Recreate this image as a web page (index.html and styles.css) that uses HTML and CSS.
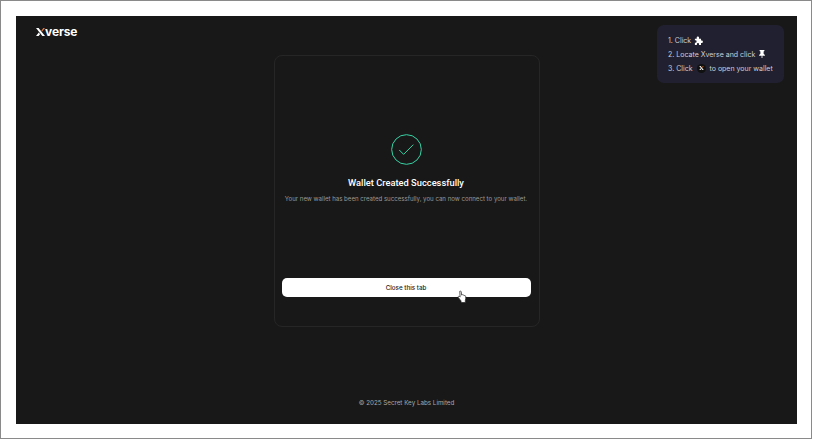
FILE: index.html
```html
<!DOCTYPE html>
<html lang="en">
<head>
    <meta charset="UTF-8">
    <title>Xverse Wallet</title>
    <link rel="stylesheet" href="styles.css">
</head>
<body>
    <div class="frame">
        <div class="screen">
            <header class="topbar">
                <div class="logo">
                    <svg class="logo-x" viewBox="0 0 9 8" width="9" height="8">
                        <path d="M0 0h2.6L9 8H6.4z" fill="#fff"/>
                        <path d="M0 8l2.8-3.4 1.3 1.6L2.6 8z" fill="#fff"/>
                        <path d="M5.3 2.7L7.4 0H9L6.2 3.6z" fill="#ee7a30"/>
                    </svg>
                    <span>verse</span>
                </div>
            </header>

            <div class="hint">
                <div class="hint-row">1. Click
                    <svg class="hint-icon" viewBox="0 0 10 10" width="9" height="9">
                        <path d="M1 3h2V1.8a1.3 1.3 0 0 1 2.6 0V3h2.2v2.1h.8a1.3 1.3 0 0 1 0 2.6h-.8V10H5.6V9a1.2 1.2 0 0 0-2.4 0v1H1V7.4h.6a1.3 1.3 0 0 0 0-2.6H1z" fill="#fff"/>
                    </svg>
                </div>
                <div class="hint-row">2. Locate Xverse and click
                    <svg class="hint-icon" viewBox="0 0 10 10" width="8" height="8">
                        <path d="M2 0h6v1.2L7 2v2.6l1.6 1.6v1H5.5V10h-1V7.2H1.4v-1L3 4.6V2L2 1.2z" fill="#fff"/>
                    </svg>
                </div>
                <div class="hint-row">3. Click
                    <span class="hint-badge">
                        <svg viewBox="0 0 9 8" width="5" height="4">
                            <path d="M0 0h2.6L9 8H6.4z" fill="#fff"/>
                            <path d="M0 8l2.8-3.4 1.3 1.6L2.6 8z" fill="#fff"/>
                            <path d="M5.3 2.7L7.4 0H9L6.2 3.6z" fill="#ee7a30"/>
                        </svg>
                    </span>
                    to open your wallet
                </div>
            </div>

            <main class="card">
                <div class="status">
                    <svg class="status-icon" viewBox="0 0 32 32" width="31" height="31">
                        <circle cx="16" cy="16" r="15.300" fill="none" stroke="#38d9a9" stroke-width="1"/>
                        <path d="M8.500 16.500l4.500 4.500 10-10" fill="none" stroke="#38d9a9" stroke-width="1"/>
                    </svg>
                    <h1>Wallet Created Successfully</h1>
                    <p>Your new wallet has been created successfully, you can now connect to your wallet.</p>
                </div>
                <button class="close-btn">Close this tab</button>
                <svg class="cursor" viewBox="0 0 12 16" width="11" height="15">
                    <path d="M3 1.2c.8-.6 1.600 0 1.700.9l.3 3.200.5-.3c.5-.2 1 0 1.200.4.5-.3 1.100-.1 1.300.4.6-.2 1.200.1 1.400.7.4 1.400.2 3.200-.3 4.600v2.400H4.400v-1.800L1.600 8.200c-.5-.7-.3-1.400.3-1.500.5-.1 1 .2 1.500.8z" fill="#fff" stroke="#222" stroke-width=".8"/>
                </svg>
            </main>

            <footer class="footer">© 2025 Secret Key Labs Limited</footer>
        </div>
    </div>
</body>
</html>
```

FILE: styles.css
```css
* {
    box-sizing: border-box;
}
html, body {
    margin: 0;
    height: 100%;
    background: #fff;
}
body {
    font-family: Inter, "Noto Sans", sans-serif;
    overflow: hidden;
}
.frame {
    width: 812px;
    height: 439px;
    border: 1px solid #8a8a8a;
    padding: 15px 14px 14px 15px;
}
.screen {
    position: relative;
    height: 100%;
    width: 781px;
    background: #181818;
    display: flex;
    flex-direction: column;
    align-items: center;
}
.topbar {
    width: 100%;
    height: 39px;
    padding: 9px 0 0 20px;
}
.logo {
    display: flex;
    align-items: baseline;
    color: #fff;
    font-size: 12px;
    font-weight: 700;
    line-height: 14px;
    letter-spacing: -0.1px;
}
.hint {
    position: absolute;
    top: 9px;
    right: 13px;
    width: 127px;
    height: 58px;
    padding: 8px 0 0 11px;
    background: #202030;
    border-radius: 7px;
    color: #cfcfd4;
    font-size: 7px;
}
.hint-row {
    display: flex;
    align-items: center;
    gap: 3px;
    height: 14px;
    white-space: nowrap;
}
.hint-badge {
    display: inline-flex;
    align-items: center;
    justify-content: center;
    width: 9px;
    height: 9px;
    margin: 0 1px;
    background: #111;
    border-radius: 50%;
}
.card {
    position: relative;
    width: 266px;
    height: 272px;
    border: 1px solid #262626;
    border-radius: 8px;
    padding: 78px 8px 0 7px;
    display: flex;
    flex-direction: column;
    align-items: center;
}
.status {
    display: flex;
    flex-direction: column;
    align-items: center;
    height: 144px;
}
.status-icon {
    margin: 0 0 11px 1px;
}
h1 {
    margin: 0 0 4px;
    color: #fff;
    font-family: Roboto, sans-serif;
    font-size: 9.300px;
    font-weight: 500;
    line-height: 14px;
    white-space: nowrap;
}
p {
    margin: 0;
    color: #9a9a9a;
    font-size: 6.100px;
    line-height: 10px;
    white-space: nowrap;
}
.close-btn {
    width: 100%;
    height: 19px;
    padding: 0;
    border: none;
    border-radius: 5px;
    background: #fff;
    color: #181818;
    font-family: Inter, sans-serif;
    font-size: 6.250px;
    font-weight: 500;
}
.cursor {
    position: absolute;
    left: 182px;
    top: 234px;
}
.footer {
    margin-top: 71px;
    color: #a8a8a8;
    font-size: 6.250px;
    line-height: 10px;
}
```
